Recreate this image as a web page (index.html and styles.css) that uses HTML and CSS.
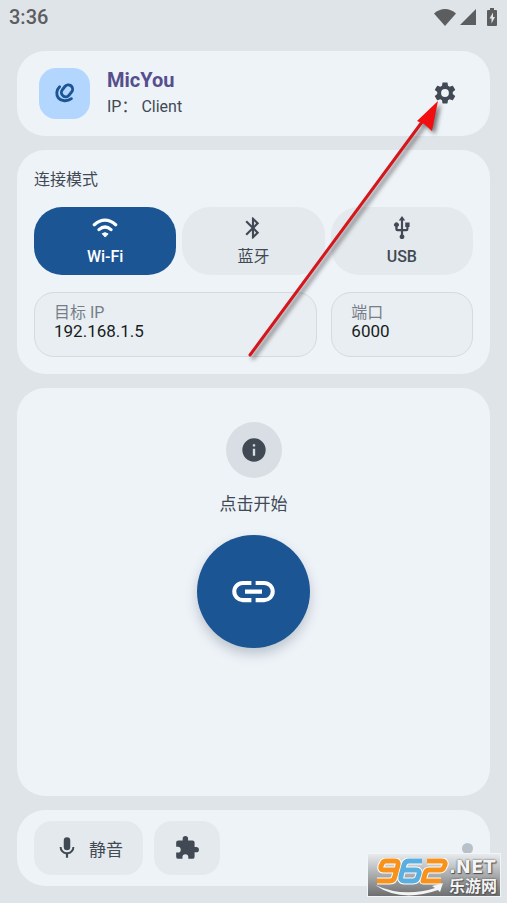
FILE: index.html
```html
<!DOCTYPE html>
<html lang="zh-CN">
<head>
<meta charset="utf-8">
<meta name="viewport" content="width=device-width, initial-scale=1">
<title>MicYou</title>
<link rel="stylesheet" href="styles.css">
</head>
<body>
<div class="status-bar">
  <time>3:36</time>
  <div class="status-icons">
    <svg width="22" height="17" viewBox="0 0 22 17"><path d="M11 17 0 4.500Q5 0 11 0t11 4.500z"/></svg>
    <svg width="16" height="16" viewBox="0 0 16 16"><path d="M16 0v16H0z"/></svg>
    <svg class="battery" width="10" height="18" viewBox="0 0 10 18"><path fill-rule="evenodd" d="M3 0h4v2h2q1 0 1 1v14q0 1-1 1H1q-1 0-1-1V3q0-1 1-1h2zM6 4.500 2.500 10.500h2v5L8 9H6z"/></svg>
  </div>
</div>

<main>
  <header class="card header">
    <div class="logo">
      <svg width="20" height="20" viewBox="0 0 20 20" fill="none" stroke="currentColor" stroke-width="2.900" stroke-linecap="round"><rect x="7.700" y="1.400" width="8.600" height="12.800" rx="4.300" transform="rotate(38 12 7.800)"/><path d="M4.600 3.800C1.300 7 .9 12 3.400 15c2.700 3.300 8.800 3.900 13 .7"/></svg>
    </div>
    <div class="identity">
      <h1>MicYou</h1>
      <p>IP： Client</p>
    </div>
    <button class="settings" aria-label="设置">
      <svg width="26" height="26" viewBox="0 0 24 24"><path d="M19.140 12.940c.04-.3.060-.61.060-.94 0-.32-.02-.64-.07-.94l2.030-1.580c.18-.14.230-.41.120-.61l-1.920-3.320c-.12-.22-.37-.29-.59-.22l-2.390.96c-.5-.38-1.030-.7-1.620-.94l-.36-2.540c-.04-.24-.24-.41-.48-.41h-3.840c-.24 0-.43.17-.47.41l-.36 2.540c-.59.240-1.130.57-1.620.94l-2.390-.96c-.22-.08-.47 0-.59.220L2.740 8.870c-.12.210-.08.470.12.610l2.030 1.580c-.05.3-.09.630-.09.940s.02.640.070.940l-2.030 1.580c-.18.140-.23.410-.12.610l1.920 3.320c.12.220.37.290.59.220l2.390-.96c.5.380 1.030.7 1.620.94l.36 2.540c.05.240.24.410.48.410h3.840c.24 0 .44-.17.47-.41l.36-2.540c.59-.24 1.130-.56 1.620-.94l2.390.96c.22.080.47 0 .59-.22l1.920-3.320c.12-.22.070-.47-.12-.61zM12 15.600A3.600 3.600 0 1 1 12 8.400a3.600 3.600 0 0 1 0 7.200z"/></svg>
    </button>
  </header>

  <section class="card connection">
    <h2>连接模式</h2>
    <div class="modes">
      <button class="mode active" aria-pressed="true">
        <svg width="26" height="26" viewBox="0 0 26 26" fill="none" stroke="currentColor" stroke-width="3.200" stroke-linecap="round"><path d="M2.300 9.800Q13 .6 23.700 9.800M7 14.600Q13 9.400 19 14.600"/><path d="M13 21.800 10.200 18.700Q13 16.600 15.800 18.700z" fill="currentColor" stroke-width="1" stroke-linejoin="round"/></svg>
        <span>Wi-Fi</span>
      </button>
      <button class="mode" aria-pressed="false">
        <svg width="26" height="26" viewBox="0 0 24 24"><path d="M17.710 7.710 12 2h-1v7.590L6.410 5 5 6.410 10.590 12 5 17.590 6.410 19 11 14.410V22h1l5.710-5.710L13.410 12zM13 5.830l1.880 1.880L13 9.590zm1.880 10.460L13 18.170v-3.760z"/></svg>
        <span>蓝牙</span>
      </button>
      <button class="mode" aria-pressed="false">
        <svg width="26" height="26" viewBox="0 0 24 24"><path d="M15 7v4h1v2h-3V5h2l-3-4-3 4h2v8H8v-2.070a2.200 2.200 0 1 0-2.200 0V13a2 2 0 0 0 2 2H11v3.050a2.220 2.220 0 1 0 2 0V15h3a2 2 0 0 0 2-2v-2h1V7z"/></svg>
        <span>USB</span>
      </button>
    </div>
    <div class="fields">
      <div class="field">
        <label for="target-ip">目标 IP</label>
        <input id="target-ip" type="text" value="192.168.1.5">
      </div>
      <div class="field">
        <label for="port">端口</label>
        <input id="port" type="text" value="6000">
      </div>
    </div>
  </section>

  <section class="card start">
    <div class="info">
      <svg width="28" height="28" viewBox="0 0 24 24"><path d="M12 2a10 10 0 1 0 0 20 10 10 0 0 0 0-20zm1 15h-2v-6h2zm0-8h-2V7h2z"/></svg>
    </div>
    <p>点击开始</p>
    <button class="connect" aria-label="点击开始">
      <svg width="51" height="51" viewBox="0 0 24 24"><path d="M3.900 12c0-1.710 1.390-3.100 3.100-3.100h4V7H7a5 5 0 0 0 0 10h4v-1.900H7A3.100 3.100 0 0 1 3.900 12zM8 13h8v-2H8zm9-6h-4v1.900h4a3.100 3.100 0 0 1 0 6.200h-4V17h4a5 5 0 0 0 0-10z"/></svg>
    </button>
  </section>

  <footer class="card toolbar">
    <button class="tool">
      <svg width="26" height="26" viewBox="0 0 24 24"><path d="M12 14a3 3 0 0 0 3-3V5a3 3 0 0 0-6 0v6a3 3 0 0 0 3 3zm5-3a5 5 0 0 1-10 0H5.200a6.800 6.800 0 0 0 5.800 6.720V21h2v-3.280A6.800 6.800 0 0 0 18.800 11z"/></svg>
      <span>静音</span>
    </button>
    <button class="tool" aria-label="插件">
      <svg width="26" height="26" viewBox="0 0 24 24"><path d="M20.500 11H19V7a2 2 0 0 0-2-2h-4V3.500a2.500 2.500 0 0 0-5 0V5H4a2 2 0 0 0-1.990 2v3.800H3.500a2.700 2.700 0 0 1 0 5.400H2V20a2 2 0 0 0 2 2h3.800v-1.500a2.700 2.700 0 0 1 5.400 0V22H17a2 2 0 0 0 2-2v-4h1.500a2.500 2.500 0 0 0 0-5z"/></svg>
    </button>
    <span class="indicator"></span>
  </footer>
</main>

<svg class="pointer" width="200" height="270" viewBox="0 0 200 270">
  <path class="shaft" d="M10 262 182 29"/>
  <path class="tip" d="M198 8 192 38 184 31 177 28z"/>
</svg>

<div class="watermark">
  <svg class="numerals" width="74" height="27" viewBox="0 0 74 27" fill="none" stroke-linejoin="round">
    <g class="outline">
      <path d="M22 12H8q-3 0-2-4l1-2q1-3 4-3h9q4 0 3 4l-3 11q-1 5-5 5H2"/>
      <path d="M47 3H34q-4 0-5 4l-3 11q-1 5 3 5h9q4 0 5-4l1-3q1-4-3-4H28"/>
      <path d="M52 3h15q4 0 3 4l-1 2q-1 3-4 3H54q-3 0-4 4l-2 7h18"/>
    </g>
    <path class="orange" d="M22 12H8q-3 0-2-4l1-2q1-3 4-3h9q4 0 3 4l-3 11q-1 5-5 5H2"/>
    <path class="blue" d="M47 3H34q-4 0-5 4l-3 11q-1 5 3 5h9q4 0 5-4l1-3q1-4-3-4H28"/>
    <path class="orange" d="M52 3h15q4 0 3 4l-1 2q-1 3-4 3H54q-3 0-4 4l-2 7h18"/>
  </svg>
  <svg class="swoosh" width="70" height="14" viewBox="0 0 70 14"><path d="M1 2Q30 15 61 5l-3-2 11-3-3 9-2-2Q27 20 1 2z"/></svg>
  <div class="wordmark">
    <span class="domain">.NET</span>
    <span class="site">乐游网</span>
  </div>
</div>
</body>
</html>
```
FILE: styles.css
```css
* {
  box-sizing: border-box;
}

body {
  position: relative;
  display: flex;
  flex-direction: column;
  min-height: 100vh;
  margin: 0;
  background: #dfe4e8;
  color: #414954;
  font-family: Roboto, "Noto Sans CJK SC", sans-serif;
}

svg {
  display: block;
  fill: currentColor;
}

svg[fill="none"] {
  fill: none;
}

h1,
h2,
p {
  margin: 0;
}

button {
  border: 0;
  padding: 0;
  color: inherit;
  font: inherit;
}

.status-bar {
  display: flex;
  align-items: center;
  justify-content: space-between;
  height: 34px;
  padding: 0 10px 0 9px;
  color: #5b5d5f;
  font-size: 20px;
  font-weight: 500;
}

.status-icons {
  display: flex;
  align-items: center;
  gap: 4px;
}

.battery {
  margin-left: 7px;
}

main {
  flex: 1;
  display: flex;
  flex-direction: column;
  gap: 14px;
  padding: 17px;
}

.card {
  border-radius: 28px;
  background: #eef3f8;
}

.header {
  display: flex;
  align-items: center;
  gap: 17px;
  padding: 15px 22px 16px;
}

.logo {
  display: grid;
  place-items: center;
  width: 51px;
  height: 51px;
  border-radius: 17px;
  background: #b3d6ff;
  color: #1b5594;
}

.identity {
  flex: 1;
}

h1 {
  color: #554f8e;
  font-size: 20px;
  font-weight: 700;
  line-height: 28px;
}

.identity p {
  font-size: 16px;
  line-height: 26px;
}

.settings {
  display: grid;
  place-items: center;
  width: 46px;
  height: 46px;
  background: none;
}

.connection {
  padding: 17px;
}

h2 {
  margin-bottom: 14px;
  font-size: 16px;
  font-weight: 400;
  line-height: 26px;
}

.modes {
  display: grid;
  grid-template-columns: repeat(3, 1fr);
  gap: 6px;
}

.mode {
  display: flex;
  flex-direction: column;
  align-items: center;
  gap: 4px;
  height: 68px;
  padding-top: 8px;
  border-radius: 28px;
  background: #e4e9ed;
  font-size: 16px;
  font-weight: 500;
  line-height: 24px;
}

.mode:nth-child(2) {
  font-weight: 400;
}

.mode.active {
  background: #1b5594;
  color: #fff;
}

.fields {
  display: grid;
  grid-template-columns: 2fr 1fr;
  gap: 14px;
  margin-top: 17px;
}

.field {
  min-width: 0;
  height: 65px;
  padding: 10px 19px;
  border: 1px solid #d5dae0;
  border-radius: 20px;
  background: #e9eef3;
}

.field label {
  display: block;
  color: #777e88;
  font-size: 16px;
  line-height: 20px;
}

.field input {
  display: block;
  width: 100%;
  height: 16px;
  padding: 0;
  border: 0;
  outline: 0;
  background: none;
  color: #171c21;
  font: 17px/16px Roboto, sans-serif;
}

.start {
  flex: 1;
  display: flex;
  flex-direction: column;
  align-items: center;
  padding-top: 34px;
}

.info {
  display: grid;
  place-items: center;
  width: 56px;
  height: 56px;
  border-radius: 50%;
  background: #d9dee4;
}

.start p {
  margin: 12px 0 17px;
  font-size: 17px;
  line-height: 28px;
}

.connect {
  display: grid;
  place-items: center;
  width: 113px;
  height: 113px;
  border-radius: 50%;
  background: #1b5594;
  box-shadow: 0 6px 12px rgb(40 60 80 / 25%);
  color: #fff;
}

.toolbar {
  display: flex;
  align-items: center;
  gap: 11px;
  padding: 11px 17px;
}

.tool {
  display: flex;
  align-items: center;
  gap: 9px;
  height: 54px;
  padding: 0 20px;
  border-radius: 18px;
  background: #e4e9ed;
  font-size: 17px;
}

.indicator {
  width: 11px;
  height: 11px;
  margin-left: auto;
  border-radius: 50%;
  background: #b8c0ca;
}

.pointer {
  position: absolute;
  top: 93px;
  right: 67px;
  overflow: visible;
  filter: drop-shadow(3px 3px 2px rgb(0 0 0 / 50%));
  pointer-events: none;
}

.shaft {
  stroke: #d3171c;
  stroke-width: 3;
  stroke-linecap: round;
}

.tip {
  fill: #f20d10;
}

.watermark {
  position: absolute;
  right: 6px;
  bottom: 6px;
  width: 134px;
  height: 44px;
  border: 1px solid #f2f4f5;
  background: linear-gradient(#e8ebed, #6c6e70);
  color: #f4f4f4;
}

.numerals {
  position: absolute;
  top: 4px;
  left: 7px;
}

.numerals path {
  stroke-width: 5;
}

.numerals .outline path {
  stroke: #fff;
  stroke-width: 7;
}

.numerals .orange {
  stroke: #f7931d;
}

.numerals .blue {
  stroke: #5aaee0;
}

.swoosh {
  position: absolute;
  top: 29px;
  left: 6px;
}

.wordmark {
  position: absolute;
  top: 5px;
  right: 3px;
  display: flex;
  flex-direction: column;
  align-items: flex-start;
  gap: 3px;
  text-shadow: 0 0 2px #444, 1px 1px 1px #555;
}

.domain {
  font: 700 18px/16px "DejaVu Sans", sans-serif;
}

.site {
  font-size: 16px;
  font-weight: 700;
  line-height: 18px;
}
```
